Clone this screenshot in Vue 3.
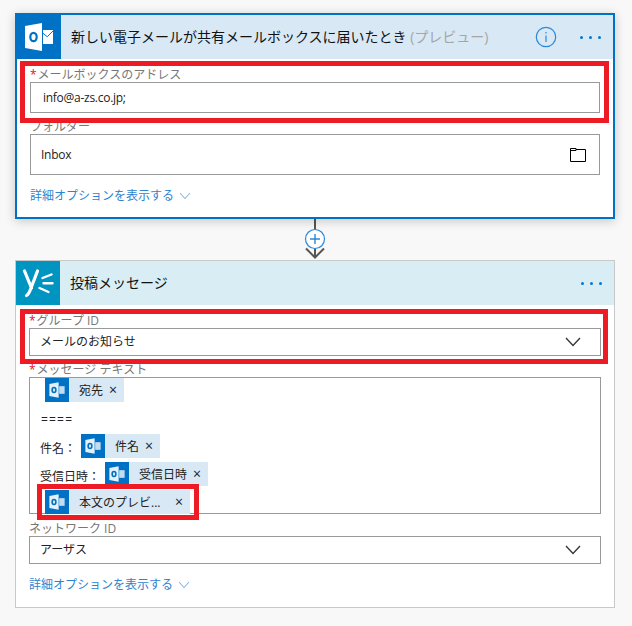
<script setup>
const msgRows = [
    { id: 1, prefix: '', chips: [{ text: '宛先', cls: 'chip-short' }] },
    { id: 2, prefix: '件名：', gap: 'gap-short', chips: [{ text: '件名', cls: 'chip-short' }] },
    { id: 3, prefix: '受信日時：', gap: 'gap-long', chips: [{ text: '受信日時', cls: 'chip-mid' }] }
];
</script>

<template>
<div class="page">
    <section class="card card-active">
        <header class="card-head head-outlook">
            <div class="logo logo-outlook">
                <svg width="44" height="44" viewBox="0 0 44 44">
                    <path d="M8 11 L25 8 V36 L8 33 Z" fill="#fff" />
                    <ellipse cx="16.5" cy="22" rx="3.2" ry="4.2" fill="none" stroke="#0072c6" stroke-width="2.2" />
                    <path d="M26 15 H36 V29 H26 Z" fill="#fff" />
                    <path d="M26 18.3 L30.3 21.7 L36 16" fill="none" stroke="#0072c6" stroke-width="1" />
                </svg>
            </div>
            <h2 class="title">新しい電子メールが共有メールボックスに届いたとき <span class="preview">(プレビュー)</span></h2>
            <svg class="info" width="22" height="22" viewBox="0 0 22 22">
                <circle cx="11" cy="11" r="9.7" fill="none" stroke="#2b88d8" stroke-width="1.2" />
                <path d="M11 9.5 V16 M11 6 V7.4" stroke="#2b88d8" stroke-width="1.2" />
            </svg>
            <div class="dots"><i></i><i></i><i></i></div>
        </header>
        <div class="card-body">
            <label class="field-label"><b>*</b>メールボックスのアドレス</label>
            <div class="input input-mail"><span class="latin">info@a-zs.co.jp;</span></div>
            <label class="field-label next">フォルダー</label>
            <div class="input input-folder">
                <span class="latin">Inbox</span>
                <svg width="16" height="14" viewBox="0 0 16 14">
                    <path d="M0.5 13.5 V0.5 H6 V1.5 H15.5 V13.5 Z M0.5 2.5 H6 V1.5" fill="none" stroke="#000" />
                </svg>
            </div>
            <a class="more">詳細オプションを表示する
                <svg width="12" height="8" viewBox="0 0 12 8"><path d="M1 1 L6 6.5 L11 1" fill="none" stroke="#8fb5de" stroke-width="1.1" /></svg>
            </a>
        </div>
        <div class="redbox red-mail"></div>
    </section>

    <div class="connector">
        <svg width="30" height="41" viewBox="0 0 30 41">
            <path d="M15 0 V39" stroke="#555" stroke-width="2" />
            <path d="M6 29.5 L15 38.5 L24 29.5" fill="none" stroke="#555" stroke-width="2" />
            <circle cx="15" cy="20" r="9.5" fill="#fff" stroke="#2b88d8" stroke-width="1.2" />
            <path d="M15 15 V25 M10 20 H20" stroke="#2b88d8" stroke-width="1.4" />
        </svg>
    </div>

    <section class="card card-plain">
        <header class="card-head head-yammer">
            <div class="logo logo-yammer">
                <svg width="44" height="44" viewBox="0 0 44 44">
                    <path d="M8.5 10 L15.5 27 M21.5 10 L15 27 C14 30 13 33 10.5 34.5" fill="none" stroke="#fff" stroke-width="3.2" stroke-linecap="round" />
                    <path d="M26.5 17 L35.5 13.5 M27.5 22.3 H36.5 M23.5 27 L32.5 31" fill="none" stroke="#fff" stroke-width="2.4" stroke-linecap="round" />
                </svg>
            </div>
            <h2 class="title">投稿メッセージ</h2>
            <div class="dots dots-plain"><i></i><i></i><i></i></div>
        </header>
        <div class="card-body">
            <label class="field-label"><b>*</b>グループ ID</label>
            <div class="input input-select">
                <span>メールのお知らせ</span>
                <svg width="16" height="10" viewBox="0 0 16 10"><path d="M1 1 L8 8.5 L15 1" fill="none" stroke="#333" stroke-width="1.3" /></svg>
            </div>
            <label class="field-label next"><b>*</b>メッセージ テキスト</label>
            <div class="input message">
                <template v-for="row in msgRows" :key="row.id">
                    <div class="msg-row" :class="{ 'row-first': !row.prefix }">
                        <span v-if="row.prefix" class="prefix" :class="row.gap">{{ row.prefix }}</span>
                        <span v-for="chip in row.chips" :key="chip.text" class="chip" :class="chip.cls">
                            <span class="chip-icon">
                                <svg width="24" height="24" viewBox="0 0 44 44">
                                    <path d="M8 11 L25 8 V36 L8 33 Z" fill="#e4f0fa" />
                                    <ellipse cx="16.5" cy="22" rx="3.4" ry="4.6" fill="none" stroke="#0072c6" stroke-width="3" />
                                    <path d="M26 15 H36 V29 H26 Z" fill="#c5dcf0" />
                                </svg>
                            </span>
                            <span class="chip-text">{{ chip.text }}</span>
                            <span class="chip-x">×</span>
                        </span>
                    </div>
                    <div v-if="row.id === 1" class="msg-equals">====</div>
                </template>
                <div class="msg-row row-first row-last">
                    <span class="chip chip-long">
                        <span class="chip-icon">
                            <svg width="24" height="24" viewBox="0 0 44 44">
                                <path d="M8 11 L25 8 V36 L8 33 Z" fill="#e4f0fa" />
                                <ellipse cx="16.5" cy="22" rx="3.4" ry="4.6" fill="none" stroke="#0072c6" stroke-width="3" />
                                <path d="M26 15 H36 V29 H26 Z" fill="#c5dcf0" />
                            </svg>
                        </span>
                        <span class="chip-text">本文のプレビ...</span>
                        <span class="chip-x">×</span>
                        <span class="redbox red-chip"></span>
                    </span>
                </div>
            </div>
            <label class="field-label network">ネットワーク ID</label>
            <div class="input input-select">
                <span>アーザス</span>
                <svg width="16" height="10" viewBox="0 0 16 10"><path d="M1 1 L8 8.5 L15 1" fill="none" stroke="#333" stroke-width="1.3" /></svg>
            </div>
            <a class="more">詳細オプションを表示する
                <svg width="12" height="8" viewBox="0 0 12 8"><path d="M1 1 L6 6.5 L11 1" fill="none" stroke="#8fb5de" stroke-width="1.1" /></svg>
            </a>
        </div>
        <div class="redbox red-group"></div>
    </section>
</div>
</template>

<style>
html, body {
    background: #f8f8f8;
}
</style>

<style scoped>
.page {
    display: flex;
    flex-direction: column;
    box-sizing: border-box;
    width: 632px;
    height: 626px;
    padding: 13px 17px 0 15px;
    overflow: hidden;
    font-family: "Open Sans", "Noto Sans CJK JP", sans-serif;
    font-size: 12px;
    color: #222;
}

.card {
    position: relative;
    box-sizing: border-box;
    width: 600px;
    background: #fff;
}

.card-active {
    height: 206px;
    border: 2px solid #0072c6;
    box-shadow: 0 2px 10px rgba(0, 0, 0, 0.2);
}

.card-plain {
    height: 348px;
    border: 1px solid #c8c8c8;
}

.card-head {
    display: flex;
    align-items: center;
    height: 44px;
}

.head-outlook {
    background: #d8e8f5;
}

.head-yammer {
    background: #d9edf5;
}

.logo {
    width: 44px;
    height: 44px;
    flex-shrink: 0;
}

.logo svg {
    display: block;
}

.logo-outlook {
    background: #0072c6;
}

.logo-yammer {
    background: #0095c1;
}

.title {
    flex: 1;
    margin: 0 0 0 10px;
    font-size: 14px;
    font-weight: 400;
    line-height: 20px;
    color: #111;
    white-space: nowrap;
}

.preview {
    color: #a6a6a6;
}

.info {
    flex-shrink: 0;
    margin-right: 23px;
}

.dots {
    display: flex;
    gap: 6px;
    margin-right: 12px;
}

.dots i {
    display: block;
    width: 3px;
    height: 3px;
    border-radius: 50%;
    background: #0078d7;
}

.card-body {
    padding: 0 13px;
}

.field-label {
    display: block;
    height: 16px;
    margin-top: 7px;
    line-height: 18px;
    color: #777;
    white-space: nowrap;
}

.field-label.next {
    margin-top: 5px;
}

.field-label.network {
    margin-top: 6px;
}

.field-label b {
    margin-right: 1px;
    font-weight: 400;
    color: #e81123;
}

.input {
    display: flex;
    align-items: center;
    justify-content: space-between;
    box-sizing: border-box;
    border: 1px solid #999;
    line-height: 18px;
    color: #222;
}

.latin {
    letter-spacing: -0.27px;
}

.input-mail {
    height: 31px;
    padding-left: 12px;
}

.input-folder {
    height: 41px;
    padding: 0 13px 0 10px;
}

.input-select {
    height: 28px;
    padding: 0 19px 0 10px;
}

.input svg {
    display: block;
}

.message {
    display: block;
    height: 137px;
}

.msg-row {
    display: flex;
    align-items: flex-start;
    height: 24px;
    margin-top: 4px;
    padding-left: 10px;
}

.row-first {
    margin-top: 0;
    padding-left: 15px;
}

.row-last {
    margin-top: 4px;
}

.msg-equals {
    height: 28px;
    padding: 9px 0 0 11px;
    box-sizing: border-box;
    line-height: 18px;
    letter-spacing: 1.2px;
}

.prefix {
    align-self: flex-end;
    line-height: 18px;
}

.gap-short {
    margin-right: 5px;
}

.gap-long {
    margin-right: 5px;
}

.chip {
    position: relative;
    display: inline-flex;
    align-items: center;
    height: 24px;
    background: #d8e8f5;
}

.chip-short {
    width: 79px;
}

.chip-mid {
    width: 103px;
}

.chip-long {
    width: 145px;
}

.chip-icon {
    width: 24px;
    height: 24px;
    flex-shrink: 0;
    background: #0072c6;
}

.chip-icon svg {
    display: block;
}

.chip-text {
    flex: 1;
    margin: 1px 0 0 10px;
    line-height: 18px;
    white-space: nowrap;
}

.chip-x {
    margin-right: 7px;
    font-size: 14px;
    line-height: 18px;
}

.more {
    display: flex;
    align-items: center;
    gap: 5px;
    height: 18px;
    margin-top: 12px;
    line-height: 18px;
    color: #2f84d0;
    white-space: nowrap;
}

.redbox {
    position: absolute;
    box-sizing: border-box;
    border: 5px solid #ed1c24;
    pointer-events: none;
}

.red-mail {
    left: 3px;
    top: 46px;
    width: 589px;
    height: 62px;
}

.red-group {
    left: 4px;
    top: 48px;
    width: 588px;
    height: 55px;
}

.red-chip {
    left: -8px;
    top: -6px;
    width: 162px;
    height: 36px;
}

.connector {
    display: flex;
    justify-content: center;
    height: 41px;
}

.connector svg {
    display: block;
}
</style>
